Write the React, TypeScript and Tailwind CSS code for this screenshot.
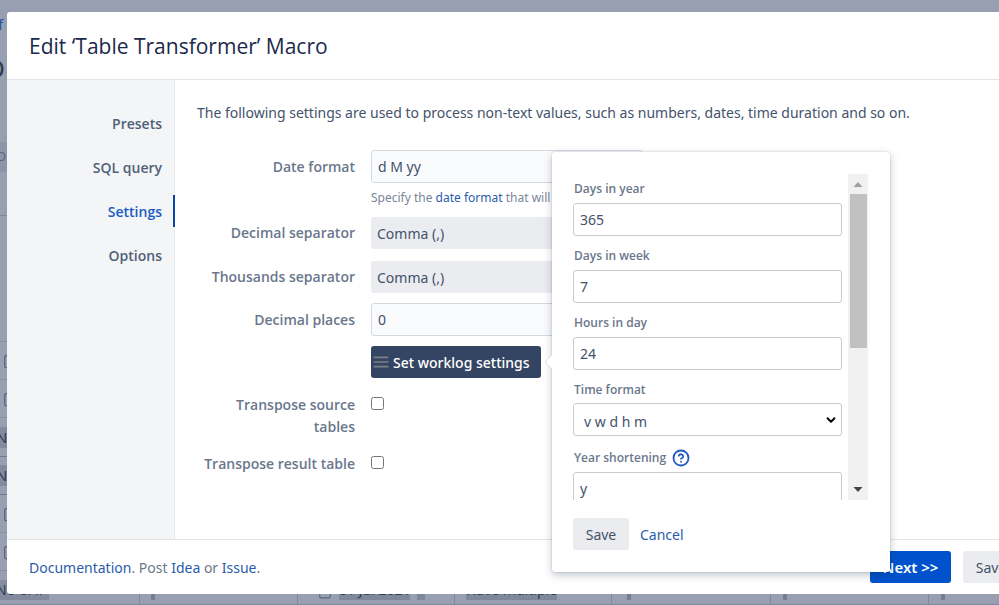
import { Calendar, ChevronDown, CircleHelp, Clipboard, Menu } from "lucide-react";

const navItems = ["Presets", "SQL query", "Settings", "Options"];

const worklogFields = [
  { id: "days-in-year", label: "Days in year", value: "365" },
  { id: "days-in-week", label: "Days in week", value: "7" },
  { id: "hours-in-day", label: "Hours in day", value: "24" },
];

const labelClass = "text-right font-['Open_Sans',sans-serif] text-[14px] leading-[22px] font-semibold text-[#6b778c]";
const inputClass =
  "h-[33px] w-full rounded-[3px] border border-[#d5d8de] bg-[#fafbfc] px-1.5 text-[14px] text-[#44526c]";
const selectClass =
  "h-8 w-full appearance-none rounded-[3px] bg-[#ebecf0] px-1.5 text-[14px] text-[#44526c]";
const popupInputClass =
  "h-[33px] w-full rounded-[3px] border border-[#c9cbd0] bg-white px-1.5 text-[14px] text-[#44526c]";
const popupLabelClass = "block pl-px font-['Open_Sans',sans-serif] text-[12px] leading-5 font-semibold text-[#6b778c]";
const linkClass = "text-[#2a5caa]";

const PageBehind = () => {
  return (
    <div aria-hidden="true" className="absolute inset-0 flex flex-col overflow-hidden bg-[#979fb1] text-[#2f3b55]">
      <div className="h-11 pt-3 text-[15px] leading-6 text-[#2456a5]">
        <span className="-ml-0.5">f</span>
      </div>
      <div className="h-[98px] pt-1 text-[26px] leading-10">
        <span className="-ml-3.5">D</span>
      </div>
      <div className="flex h-[30px] items-center bg-[#8e95a9] text-[13px] text-[#5b6680]">
        <span className="-ml-1">OF</span>
      </div>
      <div className="h-11 border-b border-[#7f889d]" />
      <div className="h-[126px] border-b border-[#858ea2]" />
      <div className="flex h-[38px] items-center border-b border-[#858ea2] pl-0.5">
        <Clipboard className="size-4 shrink-0 text-[#5c667f]" />
      </div>
      <div className="flex h-[38px] items-center border-b border-[#858ea2] pl-0.5">
        <Clipboard className="size-4 shrink-0 text-[#5c667f]" />
      </div>
      <div className="flex h-[39px] items-center border-b border-[#6f788e]">
        <span className="-ml-1 bg-[#838a9d] text-[15px] leading-[21px]">No</span>
      </div>
      <div className="flex h-[38px] items-center border-b border-[#6f788e]">
        <span className="-ml-1 bg-[#838a9d] text-[15px] leading-[21px]">No</span>
      </div>
      <div className="flex h-[38px] items-center border-b border-[#858ea2] pl-0.5">
        <Clipboard className="size-4 shrink-0 text-[#5c667f]" />
      </div>
      <div className="flex h-[38px] items-center border-b border-[#858ea2] pl-0.5">
        <Clipboard className="size-4 shrink-0 text-[#5c667f]" />
      </div>
      <div className="flex h-[34px] items-end border-b border-[#7f889d] text-[14px] leading-5">
        <div className="h-full w-[140px] shrink-0 border-r border-[#7f889d] pt-[9px]">
          <span className="-ml-1 inline-block bg-[#838a9d] pr-1 whitespace-nowrap">No UAT</span>
        </div>
        <div className="h-full w-[158px] shrink-0 border-r border-[#7f889d] pt-[9px] pl-[11px]">
          <span className="inline-block h-5 w-1 bg-[#757e94]" />
        </div>
        <div className="flex h-full w-[157px] shrink-0 items-start gap-[7px] border-r border-[#7f889d] pt-[9px] pl-5">
          <Calendar className="size-[14px] shrink-0 self-center text-[#5c667f]" />
          <span className="bg-[#7f879b] whitespace-nowrap">01 Jul 2021</span>
          <span className="h-5 w-2 bg-[#7f879b]" />
        </div>
        <div className="h-full w-[157px] shrink-0 border-r border-[#7f889d] pt-[9px] pl-[11px]">
          <span className="inline-block bg-[#7f879b] whitespace-nowrap">Have multiple</span>
        </div>
        <div className="h-full w-[159px] shrink-0 border-r border-[#7f889d] pt-[9px] pl-[15px]">
          <span className="inline-block h-5 w-1 bg-[#757e94]" />
        </div>
        <div className="h-full w-[158px] shrink-0 border-r border-[#7f889d] pt-[9px] pl-3">
          <span className="inline-block h-5 w-1 bg-[#757e94]" />
        </div>
        <div className="h-full w-[158px] shrink-0 pt-[9px] pl-3">
          <span className="inline-block h-5 w-1 bg-[#757e94]" />
        </div>
      </div>
      <div className="flex-1" />
    </div>
  );
};

const WorklogPopup = () => {
  return (
    <div className="absolute -top-[194px] left-full z-10 ml-[11px] w-[338px] rounded-[3px] bg-white px-[21px] py-[22px] shadow-[0_3px_8px_rgba(9,30,66,0.25),0_0_2px_rgba(9,30,66,0.2)]">
      <svg className="absolute top-[202px] -left-2 h-4 w-[9px]" viewBox="0 0 9 16">
        <path d="M9 0 1 8l8 8z" fill="#fff" />
        <path d="M8 1 1 8l7 7" fill="none" stroke="#dcdee3" />
      </svg>
      <div className="mr-px mb-[18px] flex h-[326px] overflow-hidden">
        <div className="mr-1.5 flex-1 space-y-2.5 pt-[5px]">
          {worklogFields.map((field) => (
            <div key={field.id}>
              <label htmlFor={field.id} className={popupLabelClass}>
                {field.label}
              </label>
              <input id={field.id} type="text" defaultValue={field.value} className={`mt-1 block ${popupInputClass}`} />
            </div>
          ))}
          <div>
            <label htmlFor="time-format" className={popupLabelClass}>
              Time format
            </label>
            <div className="relative mt-[3px]">
              <select id="time-format" className={`block appearance-none pt-1 pl-2.5 ${popupInputClass}`}>
                <option>v w d h m</option>
              </select>
              <ChevronDown className="pointer-events-none absolute top-2.5 right-1 size-[14px] text-black" strokeWidth={3.2} />
            </div>
          </div>
          <div>
            <div className="flex h-6 items-center gap-1.5">
              <label htmlFor="year-shortening" className={popupLabelClass}>
                Year shortening
              </label>
              <CircleHelp className="size-[18px] text-[#1f57c3]" strokeWidth={2.4} />
            </div>
            <input id="year-shortening" type="text" defaultValue="y" className={`mt-0.5 block ${popupInputClass}`} />
          </div>
        </div>
        <div className="flex w-5 flex-col items-center bg-[#f1f1f1]">
          <svg className="h-5 w-5 shrink-0" viewBox="0 0 20 20">
            <path d="M5.500 13 10 8l4.500 5z" fill="#a0a0a0" />
          </svg>
          <div className="h-[154px] w-[17px] bg-[#c1c1c1]" />
          <svg className="mt-auto h-5 w-5 shrink-0" viewBox="0 0 20 20">
            <path d="M5.500 7h9L10 12z" fill="#454545" />
          </svg>
        </div>
      </div>
      <div className="flex items-center gap-[11px] text-[14px]">
        <button type="button" className="h-8 w-14 rounded-[3px] bg-[#ebecf0] text-[#44526c]">
          Save
        </button>
        <a href="#cancel" className={linkClass}>
          Cancel
        </a>
      </div>
    </div>
  );
};

const App = () => {
  return (
    <div className="relative min-h-screen overflow-hidden pt-3 font-['Noto_Sans','Open_Sans',sans-serif] text-[14px]">
      <PageBehind />

      <div role="dialog" aria-labelledby="dialog-title" className="relative -mr-[50px] mb-[11px] ml-[7px] rounded-[3px] bg-white">
        <header className="border-b border-[#e3e5e9] px-[22px] pt-5 pb-[19px]">
          <h1 id="dialog-title" className="font-['Open_Sans',sans-serif] text-[21px] leading-7 font-medium text-[#1b2a4a]">
            Edit ‘Table Transformer’ Macro
          </h1>
        </header>

        <div className="flex">
          <nav className="flex w-[168px] shrink-0 flex-col gap-3 border-r border-[#e6e8ec] bg-[#f4f5f7] pt-[27px] font-['Open_Sans',sans-serif]">
            {navItems.map((item) => (
              <a
                key={item}
                href={`#${item}`}
                className={
                  item === "Settings"
                    ? "-mr-px flex h-8 items-center justify-end border-r-2 border-[#0747a6] pr-[11px] font-semibold text-[#1a5cc0]"
                    : "flex h-8 items-center justify-end pr-3 font-semibold text-[#505f79]"
                }
              >
                {item}
              </a>
            ))}
          </nav>

          <main className="flex-1 pt-[21px] pb-16 pl-[22px]">
            <p className="leading-6 text-[#44526c]">
              The following settings are used to process non-text values, such as numbers, dates, time duration and so on.
            </p>

            <form className="mt-[25px] grid grid-cols-[158px_272px] gap-x-4">
              <label htmlFor="date-format" className={`mt-1.5 ${labelClass}`}>
                Date format
              </label>
              <div>
                <input id="date-format" type="text" defaultValue="d M yy" className={`block ${inputClass}`} />
                <p className="mt-[5px] mb-[9px] h-5 text-[12px] leading-5 whitespace-nowrap text-[#7a8599]">
                  Specify the{" "}
                  <a href="#date-format" className={linkClass}>
                    date format
                  </a>{" "}
                  that will
                </p>
              </div>

              <label htmlFor="decimal-separator" className={`mt-[5px] ${labelClass}`}>
                Decimal separator
              </label>
              <select id="decimal-separator" className={`mb-3 ${selectClass}`}>
                <option>Comma (,)</option>
              </select>

              <label htmlFor="thousands-separator" className={`mt-[5px] ${labelClass}`}>
                Thousands separator
              </label>
              <select id="thousands-separator" className={`mb-2.5 ${selectClass}`}>
                <option>Comma (,)</option>
              </select>

              <label htmlFor="decimal-places" className={`mt-1.5 ${labelClass}`}>
                Decimal places
              </label>
              <input id="decimal-places" type="text" defaultValue="0" className={`mb-2.5 ${inputClass}`} />

              <div className="relative col-start-2 mb-4 w-[170px]">
                <button
                  type="button"
                  className="flex h-8 w-full items-center gap-1 rounded-[3px] bg-[#344563] pl-0.5 text-[14px] font-medium whitespace-nowrap text-white"
                >
                  <Menu className="size-4 shrink-0 scale-x-125 text-[#7d7f86]" strokeWidth={2.5} />
                  Set worklog settings
                </button>
                <WorklogPopup />
              </div>

              <label htmlFor="transpose-source" className={labelClass}>
                Transpose source tables
              </label>
              <input id="transpose-source" type="checkbox" className="mt-[3px] size-[13px]" />

              <label htmlFor="transpose-result" className={`mt-[15px] whitespace-nowrap ${labelClass}`}>
                Transpose result table
              </label>
              <input id="transpose-result" type="checkbox" className="mt-[18px] size-[13px]" />
            </form>
          </main>
        </div>

        <footer className="flex items-center justify-between border-t border-[#e3e5e9] py-[11px] pr-[30px] pl-[22px]">
          <p className="text-[#6b778c]">
            <a href="#documentation" className={linkClass}>
              Documentation
            </a>
            . Post{" "}
            <a href="#idea" className={linkClass}>
              Idea
            </a>{" "}
            or{" "}
            <a href="#issue" className={linkClass}>
              Issue
            </a>
            .
          </p>
          <div className="flex gap-3">
            <button type="button" className="h-8 w-[81px] rounded-[3px] bg-[#0052cc] text-[15px] font-semibold text-white">
              Next &gt;&gt;
            </button>
            <button type="button" className="h-8 w-14 rounded-[3px] bg-[#ebecf0] text-[#44526c]">
              Save
            </button>
          </div>
        </footer>
      </div>
    </div>
  );
};

export default App;
